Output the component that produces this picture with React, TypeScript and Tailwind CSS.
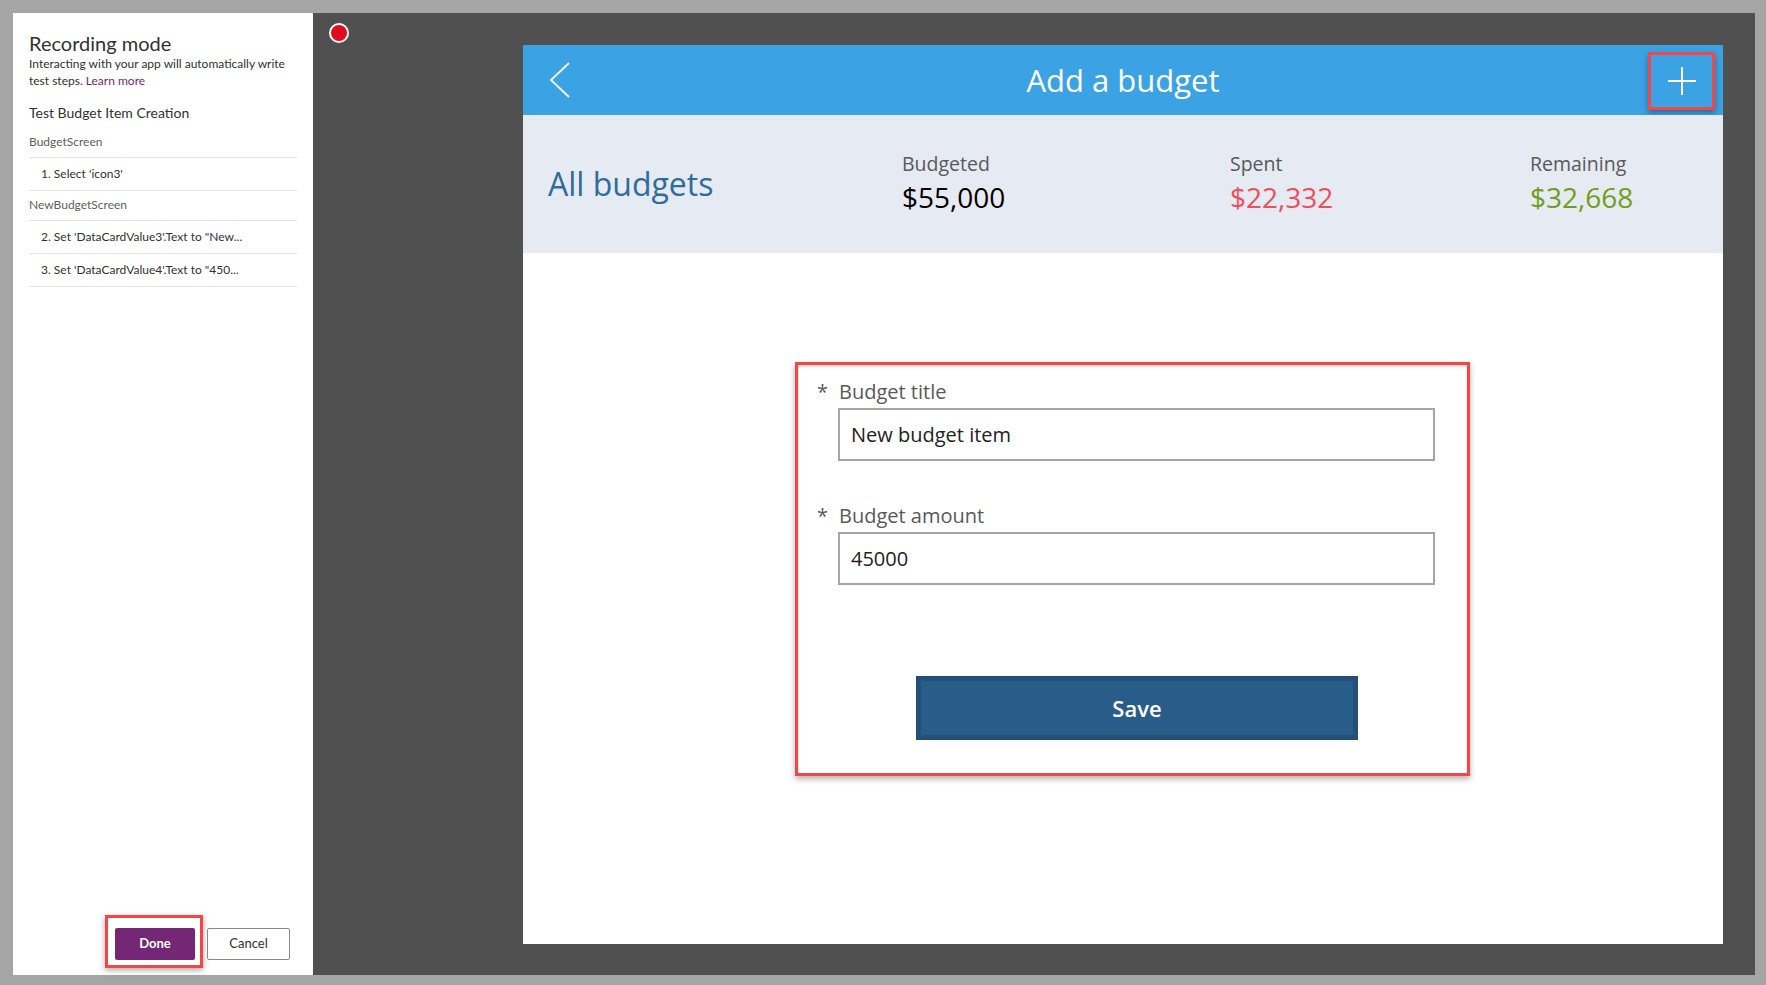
const steps = [
  { screen: 'BudgetScreen', items: ["1. Select 'icon3'"] },
  {
    screen: 'NewBudgetScreen',
    items: ["2. Set 'DataCardValue3'.Text to \"New...", "3. Set 'DataCardValue4'.Text to \"450..."],
  },
];

const stats = [
  { label: 'Budgeted', value: '$55,000', color: 'text-black', w: 'w-[328px]' },
  { label: 'Spent', value: '$22,332', color: 'text-[#ef4f5c]', w: 'w-[300px]' },
  { label: 'Remaining', value: '$32,668', color: 'text-[#6f9f1b]', w: 'flex-1' },
];

const RecordingPanel = () => (
  <div className="w-[300px] bg-white flex flex-col px-[16px] pt-[18px] pb-[7px] font-['Segoe_UI','Lato',sans-serif] text-[#323130]">
    <h1 className="text-[20px] leading-[24px]">Recording mode</h1>
    <p className="text-[12px] leading-[17px] whitespace-nowrap">
      Interacting with your app will automatically write
      <br />
      test steps. <span className="text-[#742774]">Learn more</span>
    </p>
    <p className="mt-[14px] text-[14px] leading-[20px]">Test Budget Item Creation</p>

    <div className="mt-[5px]">
      {steps.map((s) => (
        <div key={s.screen}>
          <div className="pt-[6px] pb-[7px] text-[12px] leading-[16px] text-[#605e5c] border-b border-[#e6e4e2]">
            {s.screen}
          </div>
          {s.items.map((it) => (
            <div key={it} className="h-[33px] flex items-center pl-[12px] text-[12px] border-b border-[#e6e4e2]">
              {it}
            </div>
          ))}
        </div>
      ))}
    </div>

    <div className="mt-auto flex items-start pl-[76px]">
      <div className="border-[3px] border-[#f44646] pl-[7px] pr-[5px] pt-[10px] pb-[5px] shadow-[0_2px_6px_rgba(0,0,0,0.35)]">
        <button className="w-[80px] h-[32px] bg-[#742774] text-white text-[13px] font-bold rounded-[2px]">
          Done
        </button>
      </div>
      <button className="ml-[4px] mt-[13px] w-[83px] h-[32px] bg-white border border-[#8a8886] rounded-[2px] text-[13px] text-[#323130]">
        Cancel
      </button>
    </div>
  </div>
);

const Field = ({ label, value, className }: { label: string; value: string; className?: string }) => (
  <div className={className}>
    <div className="flex text-[20px] leading-[27px] text-[#595959]">
      <span className="ml-[19px] w-[22px]">*</span>
      <span>{label}</span>
    </div>
    <div className="mt-[3px] ml-[40px] w-[597px] h-[53px] border-2 border-[#a6a6a6] flex items-center pl-[11px] text-[20px] text-[#222]">
      {value}
    </div>
  </div>
);

const BudgetApp = () => (
  <div className="w-[1200px] h-[899px] bg-white flex flex-col font-['Open_Sans',sans-serif]">
    <div className="h-[70px] bg-[#3ba3e3] flex items-center">
      <div className="w-[75px] pl-[27px] flex items-center">
        <svg width="20" height="36" viewBox="0 0 20 36" fill="none">
          <polyline points="19,1 1,18 19,35" stroke="white" strokeWidth="1.8" />
        </svg>
      </div>
      <div className="flex-1 text-center text-white text-[31px] leading-[40px]">Add a budget</div>
      <div className="w-[75px] flex justify-end pr-[8px]">
        <div className="mt-[2px] w-[67px] h-[58px] border-[3px] border-[#f44646] flex items-center justify-center shadow-[0_3px_6px_rgba(0,0,0,0.35)]">
          <svg width="30" height="30" viewBox="0 0 30 30">
            <line x1="15" y1="1" x2="15" y2="29" stroke="white" strokeWidth="2" />
            <line x1="1" y1="15" x2="29" y2="15" stroke="white" strokeWidth="2" />
          </svg>
        </div>
      </div>
    </div>

    <div className="h-[138px] bg-[#e6eaf2] flex items-center pl-[25px]">
      <div className="w-[354px] text-[32px] leading-[44px] text-[#2e6c9e]">All budgets</div>
      {stats.map((s) => (
        <div key={s.label} className={`${s.w} mb-[2px]`}>
          <div className="text-[19.5px] leading-[27px] text-[#595959]">{s.label}</div>
          <div className={`mt-[1px] text-[28px] leading-[38px] ${s.color}`}>{s.value}</div>
        </div>
      ))}
    </div>

    <div className="mt-[109px] ml-[272px] w-[675px] h-[414px] border-[3px] border-[#f44646] pt-[13px] shadow-[0_3px_6px_rgba(0,0,0,0.3),inset_0_2px_3px_rgba(0,0,0,0.15)]">
      <Field label="Budget title" value="New budget item" />
      <Field label="Budget amount" value="45000" className="mt-[41px]" />
      <button className="mt-[91px] ml-[118px] w-[442px] h-[64px] bg-[#285d89] border-[5px] border-[#235077] text-white text-[22px] font-semibold">
        Save
      </button>
    </div>
  </div>
);

export default function App() {
  return (
    <div className="w-[1766px] h-[985px] bg-[#a5a5a5] pt-[13px] pl-[13px] pr-[11px] pb-[10px] flex">
      <RecordingPanel />
      <div className="relative flex-1 bg-[#505050] pl-[210px] pt-[32px] pr-[32px] pb-[31px]">
        <div className="absolute left-[16px] top-[10px] w-[20px] h-[20px] rounded-full border-2 border-white bg-[#e00b1c]" />
        <BudgetApp />
      </div>
    </div>
  );
}
